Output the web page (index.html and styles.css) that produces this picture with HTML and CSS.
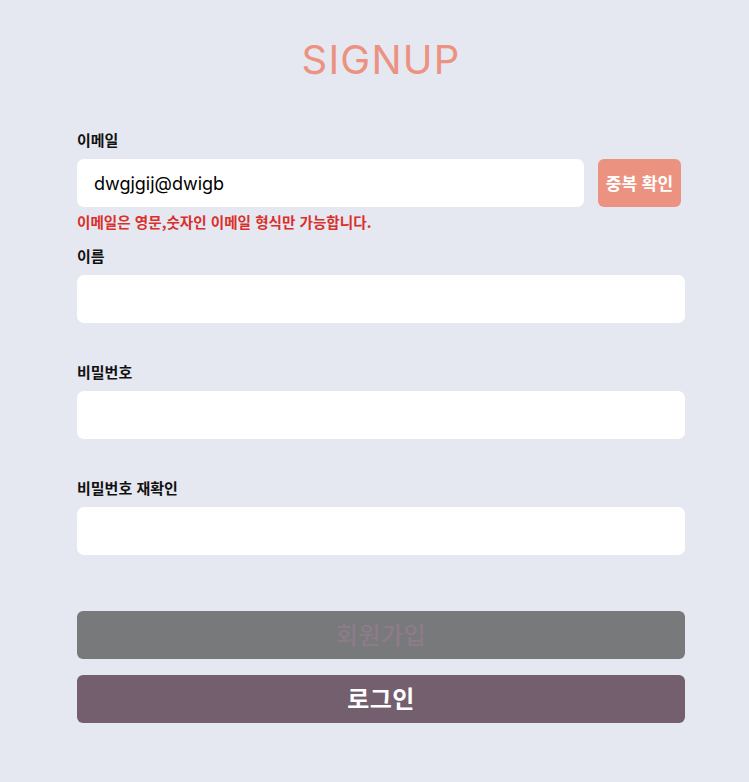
FILE: index.html
```html
<!DOCTYPE html>
<html lang="ko">
<head>
<meta charset="utf-8">
<title>SIGNUP</title>
<link rel="stylesheet" href="styles.css">
</head>
<body>
<main class="signup">
  <h1 class="title">SIGNUP</h1>
  <form class="form">
    <div class="field">
      <label class="label">이메일</label>
      <div class="row">
        <input class="input input-email" type="text" value="dwgjgij@dwigb">
        <button type="button" class="dup-btn">중복 확인</button>
      </div>
      <p class="msg">이메일은 영문,숫자인 이메일 형식만 가능합니다.</p>
    </div>
    <div class="field">
      <label class="label">이름</label>
      <input class="input" type="text">
      <p class="msg"></p>
    </div>
    <div class="field">
      <label class="label">비밀번호</label>
      <input class="input" type="password">
      <p class="msg"></p>
    </div>
    <div class="field">
      <label class="label">비밀번호 재확인</label>
      <input class="input" type="password">
      <p class="msg"></p>
    </div>
    <div class="actions">
      <button type="button" class="btn btn-signup" disabled>회원가입</button>
      <button type="button" class="btn btn-login">로그인</button>
    </div>
  </form>
</main>
</body>
</html>
```

FILE: styles.css
```css
* { box-sizing: border-box; }
html, body {
  margin: 0;
  padding: 0;
  background: #e5e8f0;
  font-family: "Noto Sans CJK KR", "Noto Sans", sans-serif;
}
.signup {
  width: 608px;
  margin-left: 77px;
  padding-top: 36px;
}
.title {
  margin: 0 0 46px;
  text-align: center;
  font-family: "Inter", "Lato", sans-serif;
  font-weight: 400;
  font-size: 40px;
  line-height: 48px;
  color: #ec9280;
  letter-spacing: 1.2px;
}
.form { display: flex; flex-direction: column; }
.field { display: flex; flex-direction: column; }
.label {
  font-size: 15px;
  font-weight: 700;
  line-height: 20px;
  color: #111;
  margin-bottom: 9px;
}
.row { display: flex; gap: 14px; }
.input {
  height: 48px;
  width: 608px;
  border: none;
  border-radius: 7px;
  background: #fff;
  padding: 0 17px;
  font-family: "Inter", "Lato", sans-serif;
  font-size: 18px;
  color: #000;
  outline: none;
}
.input-email { width: 507px; }
.dup-btn {
  width: 83px;
  height: 48px;
  border: none;
  border-radius: 6px;
  background: #ec9280;
  color: #fff;
  font-family: "Noto Sans CJK KR", sans-serif;
  font-weight: 700;
  font-size: 17px;
  padding: 0 0 2px;
}
.msg {
  margin: 0;
  height: 39px;
  padding-top: 5px;
  font-size: 14.6px;
  line-height: 20px;
  font-weight: 700;
  color: #d9302c;
}
.actions {
  display: flex;
  flex-direction: column;
  gap: 16px;
  margin-top: 17px;
}
.btn {
  height: 48px;
  border: none;
  border-radius: 6px;
  padding: 0 0 4px;
  font-family: "Noto Sans CJK KR", sans-serif;
  font-size: 24px;
  letter-spacing: 0.5px;
  font-weight: 700;
}
.btn-signup {
  background: #78797b;
  color: #8e7b89;
  font-weight: 500;
}
.btn-login {
  background: #735f6e;
  color: #fff;
}
```
